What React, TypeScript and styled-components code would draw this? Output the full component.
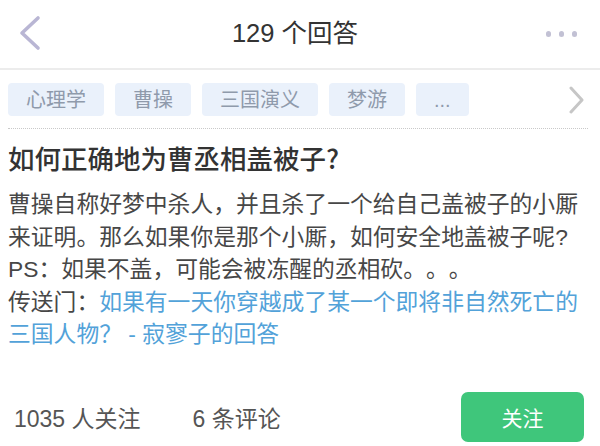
import React from "react";
import styled, { createGlobalStyle } from "styled-components";

const Global = createGlobalStyle`
  html, body { margin: 0; padding: 0; background: #fff; }
  body {
    font-family: "Liberation Sans", "Noto Sans CJK SC", sans-serif;
    -webkit-font-smoothing: antialiased;
    text-spacing-trim: space-all;
  }
  * { box-sizing: border-box; }
`;

const Page = styled.div`
  width: 600px;
  height: 446px;
  display: flex;
  flex-direction: column;
  background: #fff;
  overflow: hidden;
`;

const Header = styled.header`
  height: 70px;
  flex: none;
  display: grid;
  grid-template-columns: 80px 1fr 80px;
  align-items: center;
  border-bottom: 2px solid #ececec;
`;

const BackButton = styled.div`
  display: flex;
  align-items: center;
  padding-left: 18px;
  height: 100%;
`;

const HeaderTitle = styled.h1`
  margin: 0;
  text-align: center;
  font-size: 25.5px;
  font-weight: 400;
  color: #333;
  line-height: 1;
  padding-right: 10px;
`;

const Dots = styled.div`
  display: flex;
  justify-content: flex-end;
  align-items: center;
  gap: 7.5px;
  padding-right: 23px;
`;

const Dot = styled.span`
  width: 5.5px;
  height: 5.5px;
  border-radius: 50%;
  background: #c2c1d4;
`;

const TagRow = styled.div`
  margin: 0 12px 0 8px;
  padding: 13px 0 12px;
  display: flex;
  align-items: center;
  gap: 11px;
  border-bottom: 1px dotted #c9c9c9;
`;

const Tag = styled.span`
  height: 33px;
  padding: 0 18px;
  display: flex;
  align-items: center;
  background: #eaf1fb;
  border-radius: 4px;
  color: #8f9aab;
  font-size: 20px;
  line-height: 1;
`;

const TagMore = styled.div`
  margin-left: auto;
  display: flex;
  align-items: center;
  padding-right: 4px;
`;

const Content = styled.main`
  padding: 12px 12px 0 8px;
  display: flex;
  flex-direction: column;
`;

const QTitle = styled.h2`
  margin: 0;
  font-family: "Noto Sans CJK SC", sans-serif;
  font-size: 26.5px;
  font-weight: 500;
  color: #333;
  line-height: 34px;
`;

const Body = styled.p`
  margin: 13px 0 0;
  font-size: 22.8px;
  line-height: 32.5px;
  color: #474747;
`;

const Link = styled.span`
  color: #52a2d9;
`;

const Footer = styled.footer`
  margin-top: auto;
  padding: 0 16px 3px 14px;
  height: 56px;
  display: flex;
  align-items: center;
`;

const Stat = styled.span`
  font-size: 23px;
  color: #555;
  margin-right: 52px;
`;

const FollowButton = styled.button`
  margin-left: auto;
  width: 123px;
  height: 50px;
  border: none;
  border-radius: 7px;
  background: #3fc67b;
  color: #fff;
  font-family: inherit;
  font-size: 21px;
`;

const tags = ["心理学", "曹操", "三国演义", "梦游", "..."];

export default function App() {
  return (
    <Page>
      <Global />
      <Header>
        <BackButton>
          <svg width="24" height="38" viewBox="0 0 24 38">
            <polyline
              points="20,3 4,18 20,33"
              fill="none"
              stroke="#b9b6d4"
              strokeWidth="3.6"
              strokeLinecap="round"
              strokeLinejoin="round"
            />
          </svg>
        </BackButton>
        <HeaderTitle>129 个回答</HeaderTitle>
        <Dots>
          <Dot />
          <Dot />
          <Dot />
        </Dots>
      </Header>
      <TagRow>
        {tags.map((t) => (
          <Tag key={t}>{t}</Tag>
        ))}
        <TagMore>
          <svg width="16" height="28" viewBox="0 0 16 28">
            <polyline
              points="3,2 14,14 3,26"
              fill="none"
              stroke="#c6c6c6"
              strokeWidth="3"
              strokeLinecap="round"
              strokeLinejoin="round"
            />
          </svg>
        </TagMore>
      </TagRow>
      <Content>
        <QTitle>如何正确地为曹丞相盖被子?</QTitle>
        <Body>
          曹操自称好梦中杀人，并且杀了一个给自己盖被子的小厮来证明。那么如果你是那个小厮，如何安全地盖被子呢?
          <br />
          PS：如果不盖，可能会被冻醒的丞相砍。。。
          <br />
          传送门：<Link>如果有一天你穿越成了某一个即将非自然死亡的三国人物？ - 寂寥子的回答</Link>
        </Body>
      </Content>
      <Footer>
        <Stat>1035 人关注</Stat>
        <Stat>6 条评论</Stat>
        <FollowButton>关注</FollowButton>
      </Footer>
    </Page>
  );
}
